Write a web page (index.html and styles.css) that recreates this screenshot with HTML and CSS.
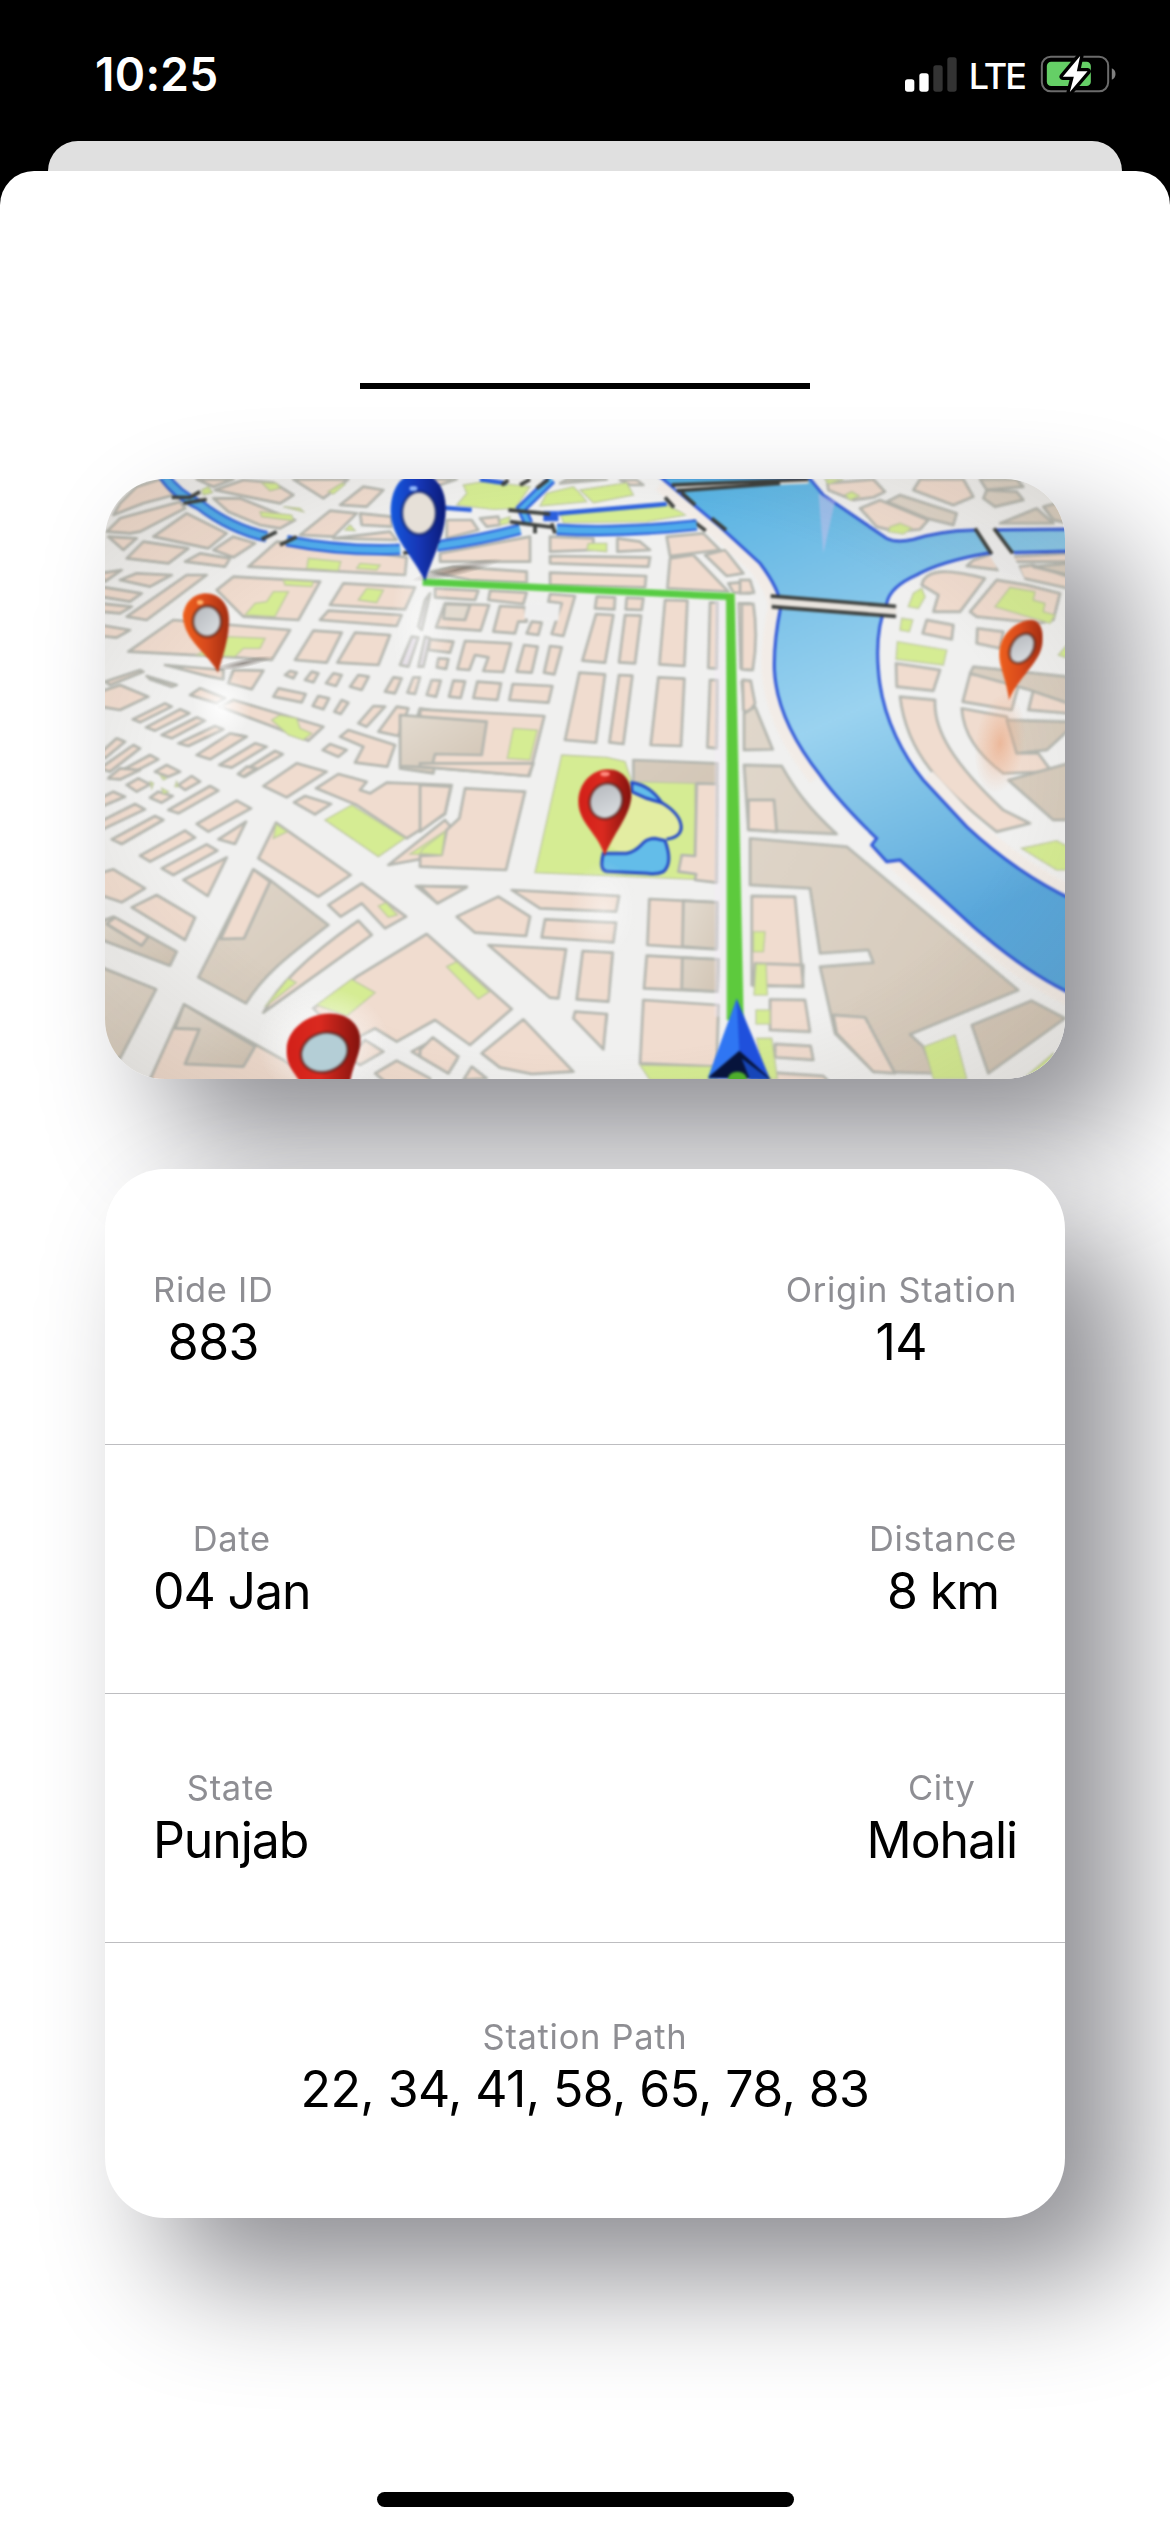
FILE: index.html
```html
<!DOCTYPE html>
<html lang="en">
<head>
<meta charset="utf-8">
<title>Ride details</title>
<link rel="stylesheet" href="styles.css">
</head>
<body>
<header class="status">
  <span class="time">10:25</span>
  <div class="indicators">
    <svg class="signal" viewBox="80 80 156 105">
      <rect x="80" y="147" width="28" height="37" rx="8" fill="#fff"/>
      <rect x="123" y="129" width="28" height="55" rx="8" fill="#fff"/>
      <rect x="165" y="105" width="28" height="79" rx="8" fill="#333"/>
      <rect x="207" y="81" width="28" height="103" rx="8" fill="#333"/>
    </svg>
    <span class="network">LTE</span>
    <svg class="battery" viewBox="478 72 230 120">
      <rect x="483" y="80" width="199" height="104" rx="27" fill="none" stroke="#6b6b6b" stroke-width="6"/>
      <rect x="498" y="95" width="132" height="73" rx="13" fill="#65cf66"/>
      <path d="M693 115Q704 120 704 132T693 149Z" fill="#808080"/>
      <path class="bolt" d="M598 78L546 140H579L567 186L620 124H588Z"/>
    </svg>
  </div>
</header>
<div class="back-sheet"></div>
<main class="sheet">
  <div class="rule"></div>
  <svg class="map" viewBox="15 27 2880 1800">
    <defs>
      <linearGradient id="water" x1="0" y1="0" x2="0.35" y2="1">
        <stop offset="0" stop-color="#51b0e2"/><stop offset=".3" stop-color="#7cc2e8"/>
        <stop offset=".55" stop-color="#9bd3f0"/><stop offset=".75" stop-color="#7cc0e6"/><stop offset="1" stop-color="#59a7db"/>
      </linearGradient>
      <linearGradient id="tan" x1="0" y1="0" x2="1" y2="1"><stop offset="0" stop-color="#e4dcd1"/><stop offset="1" stop-color="#d2c5b5"/></linearGradient>
      <linearGradient id="orange"><stop offset="0" stop-color="#ee601c"/><stop offset=".5" stop-color="#d84a1c"/><stop offset="1" stop-color="#a32e12"/></linearGradient>
      <linearGradient id="red"><stop offset="0" stop-color="#d22019"/><stop offset=".45" stop-color="#db2a20"/><stop offset="1" stop-color="#82130e"/></linearGradient>
      <linearGradient id="blue"><stop offset="0" stop-color="#1458dc"/><stop offset=".5" stop-color="#1738b8"/><stop offset="1" stop-color="#0b1b78"/></linearGradient>
      <linearGradient id="glass" x1="0" y1="0" x2="1" y2="1"><stop offset="0" stop-color="#b3b6bb"/><stop offset="1" stop-color="#dfe3e6"/></linearGradient>
      <radialGradient id="glow"><stop offset="0" stop-color="#fff" stop-opacity=".9"/><stop offset="1" stop-color="#fff" stop-opacity="0"/></radialGradient>
      <radialGradient id="ember"><stop offset="0" stop-color="#e8a078" stop-opacity=".6"/><stop offset="1" stop-color="#eeb08b" stop-opacity="0"/></radialGradient>
      <radialGradient id="shade"><stop offset="0" stop-color="#50463e" stop-opacity=".55"/><stop offset="1" stop-color="#50463e" stop-opacity="0"/></radialGradient>
      <radialGradient id="edge" cx=".5" cy=".5" r=".72"><stop offset=".62" stop-color="#54442f" stop-opacity="0"/><stop offset="1" stop-color="#54442f" stop-opacity=".14"/></radialGradient>
    </defs>
    <rect x="0" y="0" width="2910" height="1850" fill="#f0f0ef"/>
    <g class="soft">
      <!-- north-west blocks -->
      <g>
        <path class="b" d="M60 100L110 50 180 28 222 75 130 100 40 135ZM20 185L60 145 240 95 255 115 120 185 90 190ZM160 200L260 130 380 190 325 235ZM25 200L110 205 70 240ZM80 265L130 215 265 235 205 280ZM255 275L300 250 390 265 375 290ZM340 240L400 200 465 220 400 262ZM340 85L420 85 520 125 585 150 540 175 480 165 385 125ZM345 60L430 30 520 38 580 75 540 100 440 80ZM290 28L400 28 340 50ZM580 28H745L670 85ZM720 105L790 50 850 60 800 110ZM600 195L690 122 770 130 700 200ZM780 130L875 140V170L785 165ZM445 290L530 215 700 232 920 262 915 315ZM700 205L870 185 890 210Z"/>
        <path class="b" d="M0 310L65 300 15 335ZM60 330L110 310 215 315 150 350ZM0 350L125 370 90 395 0 380ZM0 400L95 410 60 430 0 425ZM80 440L260 315H320L140 450ZM0 465L90 480 50 503 0 498ZM350 360L400 320 660 335 595 450 430 440ZM690 405L730 340 945 352 915 418ZM660 450L685 422 905 435 890 468ZM85 545L220 450 570 480 515 570 370 560ZM585 570L640 482 725 488 680 578ZM712 578L765 488 870 495 835 585ZM195 585L370 600V628L330 620ZM385 640L400 600 490 602 455 658Z"/>
        <path class="b" d="M555 615L570 603 590 608 580 625ZM615 630L635 605 655 610 640 637ZM678 640L700 610 725 615 708 648ZM750 650L775 615 806 620 785 660ZM855 665L880 622 905 625 885 670ZM922 668L940 622H960L945 672ZM520 680L535 655 617 672 605 697ZM638 708L655 678 687 685 670 718ZM703 725L725 690 745 698 722 732ZM270 675L300 655 375 685 350 700ZM360 710L400 690 670 770 625 812 520 770ZM140 618L230 645 215 650 150 628ZM15 635L120 600 130 605 30 645ZM0 665L60 645 145 680 60 720 0 710Z"/>
        <path class="b" d="M98 748L195 700 215 710 120 757ZM138 772L240 718 268 730 165 782ZM185 795L290 742 315 752 215 805ZM235 820L345 768 370 778 265 828ZM290 855L390 790 440 800 330 868ZM358 885L465 820 500 830 395 893ZM415 912L525 843 548 853 435 920ZM0 850L50 805 75 815 15 865ZM0 895L100 825 120 835 30 905ZM30 920L150 855 175 868 60 928ZM165 905L200 885 240 905 205 920ZM775 760L820 708 855 710 800 770ZM835 785L890 710 925 715 895 798ZM720 800L745 780 885 825 862 890 765 878 790 830ZM668 840L690 822 740 840 715 860Z"/>
        <path class="t" d="M900 895L960 715 1160 750 1145 860 1010 855 1000 910Z"/>
        <path class="b v" d="M955 470L975 390 990 370 965 480ZM900 585L935 500 955 502 925 590ZM955 590L975 500 990 505 970 590Z"/>
        <path class="g" d="M435 435L465 400 500 395 520 365H565L525 440ZM550 330L640 335 635 350 555 345ZM775 390L800 355 850 360 830 398ZM290 555L380 500 495 505 480 535H430L405 560ZM515 750L540 735 590 745 600 775 635 790 610 810 565 795ZM620 295L625 265 722 275 715 302ZM770 295L780 280 840 285 830 300ZM480 125L575 135 580 152 485 140ZM485 38L530 40 540 55 510 62ZM305 60L325 50 337 68 310 75ZM685 65L725 40 735 43 700 72ZM550 110L600 115 610 125ZM735 180L750 165 765 182Z"/>
      </g>
      <!-- north blocks -->
      <g transform="translate(960 0)">
        <path class="b" d="M0 70L60 45 110 28H0ZM80 150L155 150 175 180 80 205ZM180 145L235 140 240 165 200 170ZM60 250L330 200V275L60 275ZM30 305L100 290 320 305V338L150 330ZM390 200L520 205V240L390 245ZM390 258L690 262 685 290 390 280ZM390 308L678 318 675 352 390 345ZM592 205L660 215 690 240 592 245ZM740 200L850 190 900 240 750 258ZM750 265L820 255 925 365 742 355ZM855 255L915 240 970 310 920 318ZM925 340L990 335V370L940 368ZM45 355L175 362 165 390 45 382ZM210 362L320 368 310 402 205 390ZM390 372L465 378 430 498 395 492 425 400 385 395ZM600 30L650 30 670 45 630 45ZM420 40L560 28H440Z"/>
        <path class="b" d="M75 400L207 405 182 482 48 472ZM240 408L315 412 320 455 295 455 285 490 220 485ZM335 455L365 458 355 495 320 490ZM530 380L585 382 583 418 525 415ZM620 383L670 385 665 420 617 418ZM528 432L580 435 555 578 487 572ZM615 435L663 437 645 580 597 577ZM735 390L802 392 793 588 718 583ZM870 398H892L890 596 865 594ZM955 400H990L988 600 962 595ZM30 508L100 515 90 548 25 540ZM55 565L85 567 78 597 50 592ZM135 513L273 520 250 606 190 603 205 562 165 555 148 600 112 597ZM312 525L353 530 335 608 290 605ZM390 528L425 532 403 613 372 608ZM478 608L555 613 528 818 435 810ZM597 615L637 617 610 822 568 817ZM715 622L793 626 783 828 692 825ZM870 630H892L890 835 862 832ZM35 630L62 632 48 680 20 675ZM100 632L135 634 122 684 87 680ZM172 635L243 640 232 690 160 684ZM278 642L397 648 385 698 268 690ZM965 635H990V740L975 735Z"/>
        <path class="b" d="M0 718L373 738 328 918 0 890Z"/><path class="t" d="M-60 735L200 755 185 855 45 852 35 893-60 888Z"/>
        <path class="g" d="M280 775L352 780 330 870 262 865ZM505 220H560V245L500 240ZM130 45L190 35 330 50 285 115 220 118 110 105 140 70ZM380 70L460 50 480 70 500 95 360 108ZM480 60L620 38 640 75 520 98ZM420 130L740 105 800 135 680 155 430 158ZM240 150L270 140 265 160 240 165Z"/>
        <path class="t" d="M75 402L150 405 135 450 70 446ZM640 870L892 880 890 1040 640 1010Z"/>
        <path class="g" d="M425 855L560 862 615 875 635 935 825 940 827 1228 345 1208Z"/>
        <path class="b" d="M830 940L892 942 890 1238 825 1230 828 1212 775 1205 785 1155 825 1158Z"/>
        <path class="road" d="M318 395L420 402 415 452 312 445Z"/>
      </g>
      <!-- south-west blocks -->
      <g transform="translate(0 900)">
        <path class="b" d="M490 48L590-20 680 5 560 82ZM648 55L715 12 800 35 780 60 810 70 860 38 1055 45 1035 132 920 205 770 105ZM582 97L615 78 693 102 645 133ZM25 25L60-5 120 0 60 28ZM80 45L115 25 150 43 110 65ZM235 45L275 18 300 35 255 60ZM150 83L175 65 218 78 185 98ZM415 12L440-10 470-5 430 20ZM205 120L330 48 355 62 235 130ZM0 85L40 65 75 80 0 112ZM0 155L105 102 135 118 0 182ZM35 208L165 138 190 150 65 222ZM290 162L410 92 453 115 325 185ZM355 208L438 155 405 222ZM120 257L255 182 285 203 150 275ZM185 295L320 223 352 242 220 315ZM250 330L380 262 323 378ZM0 310L40 298 135 355 65 397 0 375ZM95 412L170 375 285 443 255 510Z"/>
        <path class="t" d="M0 455L40 440 230 545 210 587 0 508Z"/><path class="b" d="M20 462L45 442 145 500 125 527Z"/>
        <path class="t" d="M0 590L168 658 60 865 0 850ZM460 298L510 330 685 465C590 540 500 600 438 700L295 622Z"/>
        <path class="b" d="M460 298L510 335 432 505 362 507ZM528 158L752 315 655 380 475 265ZM685 405L785 340 918 440 855 475 785 400 722 440ZM775 452L815 495 490 728C530 650 620 560 775 452Z"/>
        <path class="b" d="M770 620L980 492 1235 717 1110 825 1005 750 890 815 825 775 740 820 640 715ZM145 940L252 703 550 870 650 940ZM745 865L795 810 850 845 780 885ZM935 845L990 815 1070 870 1045 910ZM825 910L890 872 990 925V940H860ZM865 285L1035 150 1060 180 1030 255ZM948 348L1100 350 1012 400Z"/>
        <path class="t" d="M252 703L465 830 430 890 255 882 298 778 225 775Z"/>
        <path class="g" d="M675 150L755 105 915 205 835 260ZM528 162L562 185 520 205ZM835 408L858 398 892 435 865 442ZM650 705L755 628 825 668 740 738ZM565 625L588 638 495 710ZM930 252L1040 180 1025 255ZM150 35L160 40 155 55ZM180 15L200 25 190 30ZM230 35L235 50 225 50ZM185 55L205 65 190 72Z"/>
      </g>
      <!-- south blocks -->
      <g transform="translate(960 900)">
        <path class="b" d="M0-10L325 18 340-20H0ZM0 45L92 50 75 130 0 185ZM135 55L315 65 258 300 0 290 0 258 65 255 80 180 118 145ZM0 348L140 352 52 400ZM235 380L330 440 318 498 165 488 110 440ZM275 360L597 378 588 425 360 415ZM375 448L588 458 580 517 365 502ZM205 525L438 538 415 685 390 683ZM488 543L578 548 565 695 470 688ZM465 725L560 732 550 838 460 745ZM310 748L460 905 335 912 240 893 185 850ZM0 840L38 802 115 860 85 910 0 860ZM130 930L155 890 200 925ZM688 387L892 397 890 538 682 525ZM680 557L895 568 892 665 672 655ZM670 690L895 705 890 890 660 880Z"/>
        <path class="t" d="M790 392L892 397 890 537 787 530ZM787 563L895 568 892 665 785 658Z"/>
        <path class="g" d="M80 590L110 575 208 665 175 687ZM660 885L890 890V930H690ZM10 235L75 185 65 255 0 250Z"/>
      </g>
      <!-- east bank -->
      <g transform="translate(1920 0)">
        <path class="b" d="M0 330L30 330 42 368 0 370ZM5 402L40 402C50 470 50 530 38 600L5 598ZM8 630L32 632 45 700 25 730 10 720ZM262 40L400 28 435 65 400 82 340 90 265 60ZM360 115L420 90 565 150 540 178 470 185 410 170ZM540 28H670L700 80 640 105 520 60ZM700 270L760 250 775 300 680 288ZM550 330C570 300 620 295 735 325L660 425 580 425 595 375 545 345ZM690 425L770 330 860 345 960 370 940 450 900 460 710 440ZM835 290L880 285 985 320V355L850 325ZM820 260L985 250V275H820ZM560 450L640 465 635 508 548 490ZM712 475L790 485 780 535 710 520ZM468 580L600 600 580 662 470 650ZM480 680L585 690C580 780 640 880 790 1020L870 1060 770 1085C600 950 500 850 480 680ZM690 612L840 630 815 720 668 695ZM880 660L985 690V730L865 720ZM665 715L800 740 830 850 895 850 935 905 790 910C710 850 670 790 665 715Z"/>
        <path class="t" d="M12 730L45 710 98 838 12 840ZM12 885L125 888C160 950 200 1010 290 1092L25 1080ZM30 1105L320 1130 835 1560 510 1693 550 1730 580 1810 400 1805 285 1690 240 1490 400 1478 385 1440 240 1450 210 1255 30 1245ZM695 1665L875 1592 975 1645 745 1810ZM700 590L985 620V700L870 660 690 610ZM800 750L985 755V780L920 840 830 850ZM805 930L985 880V1050L940 1050ZM740 60L830 65 850 90 765 110 730 85ZM440 95L480 75 650 130 640 165 560 145ZM780 160L890 115 940 160ZM910 110L985 90V160L940 150ZM720 28L830 28 850 50 740 60ZM880 290L985 280V315Z"/>
        <path class="b" d="M25 990L102 990 110 1085 25 1078ZM35 1278L165 1280 190 1550 35 1545ZM45 1480L190 1485 188 1548H40ZM90 1588L195 1590 210 1685 90 1680ZM105 1722L212 1728 220 1770 105 1762ZM60 1805L250 1818 370 1940H60ZM280 1635L375 1642 465 1810 400 1805 290 1690Z"/>
        <path class="g" d="M545 355L555 380 535 415 505 410 520 370ZM485 445L518 450 508 485 480 480ZM472 515L620 540 610 585 468 568ZM765 410L810 352 885 365 880 390 915 400 910 425 945 435 930 460ZM450 170L480 160 515 175 490 192 445 185ZM845 1135L950 1112 985 1130V1200L950 1200ZM552 1730L645 1695 680 1827H580ZM40 1385H75L70 1445H40ZM48 1482H78L82 1575H42ZM48 1620H90V1662H48ZM50 1705H95L112 1827H70ZM315 75L335 65 358 78 330 90ZM255 28H310L265 42ZM850 1827L940 1750 930 1827ZM985 520L955 555 985 565Z"/>
        <path class="road" d="M695 170L775 160 855 330 785 315Z"/>
      </g>
      <!-- river and canals -->
      <g transform="translate(1920 0)">
        <path class="bank" d="M240 915Q110 750 103 600 100 520 122 410 120 360 60 280L-60 170-230 30M550 930L680 1070Q830 1210 990 1285M410 1105L480 1170 700 1370Q850 1500 1000 1575"/>
        <path class="river" d="M205 20L250 75 440 205Q470 220 520 208 600 182 700 180L1000 177V243L740 250Q600 275 530 315 450 350 440 400 405 480 415 600C425 750 500 870 550 930L680 1070Q830 1210 1000 1290V1575L975 1562Q850 1500 700 1370L480 1170 440 1175 395 1125 410 1105C300 1000 250 930 240 915Q110 750 103 600 100 520 122 410 120 360 60 280L-60 170-240 20Z"/>
        <path d="M235 70L250 250 285 95Z" fill="#d9c4ef" opacity=".45"/>
        <path class="road" d="M700 160L755 165 825 255 760 260Z"/>
        <path class="rail" d="M705 175L755 252M762 175L818 250"/>
        <path class="bridge" d="M92 395L468 424"/><path class="rail" d="M92 378L468 409M95 410L468 439"/>
        <path class="bridge slim" d="M-195 50L205 34"/>
        <path class="rail" d="M-205 45L205 28M-190 62L120 40M-225 82L-198 112M-175 68L-135 105M-142 152L-103 182M-85 145L-42 180"/>
      </g>
      <path class="canal-edge" d="M190 15Q230 75 300 105 390 175 500 200M560 212Q730 245 900 238M1010 228Q1140 210 1260 178M1370 178Q1550 190 1790 165"/>
      <path class="canal" d="M190 15Q230 75 300 105 390 175 500 200M560 212Q730 245 900 238M1010 228Q1140 210 1260 178M1370 178Q1550 190 1790 165"/>
      <path class="canal-edge slim" d="M1375 130L1700 102M1030 113L1115 120M1140 28L1220 40"/>
      <path class="canal-edge thin" d="M1355 28L1265 115 1285 160M1330 138H1375"/>
      <path class="canal thin" d="M1355 28L1265 115 1285 160"/>
      <path class="rail" d="M215 82H270L300 65M250 100L320 88M485 208L530 185M540 225L590 200M910 250L945 240M1225 120L1350 132M1230 155L1360 172M1305 170V190M1355 160L1365 190M1205 45L1225 30M1260 45L1290 28M1310 55L1345 28"/>
      <!-- pond -->
      <path d="M1590 940C1620 960 1650 960 1690 1000 1740 1030 1755 1080 1720 1105L1640 1110 1570 1150 1530 1130 1560 1000Z" fill="#e3eda2"/>
      <path class="pond" d="M1595 938Q1650 945 1685 998L1640 985 1595 965ZM1510 1150H1580C1630 1140 1620 1105 1665 1105L1695 1112Q1720 1180 1690 1205 1670 1215 1640 1210L1525 1205Q1495 1205 1510 1150Z"/>
      <path d="M1685 998C1755 1040 1765 1100 1700 1107" fill="none" stroke="#2449c8" stroke-width="9"/>
    </g>
    <rect x="0" y="0" width="2910" height="1850" fill="url(#edge)"/>
    <ellipse cx="365" cy="710" rx="90" ry="110" fill="url(#glow)"/>
    <ellipse cx="960" cy="470" rx="90" ry="260" fill="url(#glow)" opacity=".5"/>
    <ellipse cx="1510" cy="1320" rx="100" ry="150" fill="url(#glow)" opacity=".5"/>
    <ellipse cx="670" cy="1720" rx="200" ry="170" fill="url(#glow)"/>
    <ellipse cx="430" cy="580" rx="95" ry="14" fill="url(#shade)" transform="rotate(-12 430 580)"/>
    <ellipse cx="1070" cy="300" rx="140" ry="18" fill="url(#shade)" transform="rotate(-13 1070 300)"/>
    <ellipse cx="2700" cy="820" rx="75" ry="150" fill="url(#ember)" transform="rotate(8 2700 820)"/>
    <g class="soft">
      <path d="M1878 1640V380" stroke="#f3ebf8" stroke-width="70" opacity=".4"/>
      <path d="M968 336L1893 380" stroke="#57cc43" stroke-width="21"/>
      <path d="M1878 370H1904L1931 1650H1880V900Z" fill="#5dca3d"/>
      <!-- pins -->
      <path d="M318 370C360 370 388 405 387 450 386 510 370 550 354 608 325 550 250 510 250 440 250 400 280 370 318 370Z" fill="url(#orange)"/>
      <ellipse class="lens" cx="321" cy="454" rx="42" ry="46"/>
      <path d="M955 10C1010 10 1040 60 1037 125 1034 200 1000 255 975 333 940 260 872 200 872 125 872 60 900 10 955 10Z" fill="url(#blue)"/>
      <ellipse class="lens cream" cx="957" cy="129" rx="51" ry="64"/>
      <path d="M2790 450C2820 448 2832 480 2827 520 2820 580 2755 620 2727 690 2718 620 2695 590 2698 545 2702 490 2750 452 2790 450Z" fill="url(#orange)"/>
      <ellipse class="lens" cx="2766" cy="535" rx="33" ry="48" transform="rotate(32 2766 535)"/>
      <path d="M1520 898C1570 895 1597 935 1594 980 1590 1040 1540 1090 1514 1158 1495 1090 1435 1060 1435 995 1435 940 1475 900 1520 898Z" fill="url(#red)"/>
      <ellipse class="lens" cx="1518" cy="993" rx="48" ry="54" transform="rotate(25 1518 993)"/>
      <path d="M690 1630C745 1630 785 1665 781 1720 778 1760 755 1790 748 1850H610C580 1800 558 1790 560 1735 562 1680 620 1630 690 1630Z" fill="url(#red)"/>
      <ellipse class="lens sky" cx="673" cy="1747" rx="71" ry="58" transform="rotate(-18 673 1747)"/>
      <ellipse cx="940" cy="55" rx="12" ry="8" fill="#91b7fa"/><ellipse cx="300" cy="397" rx="10" ry="7" fill="#ffb36c"/>
      <ellipse cx="1515" cy="912" rx="14" ry="7" fill="#ff8b7f"/>
      <!-- heading arrow -->
      <path d="M1910 1586L2010 1827H1824Z" fill="#1f50dc"/>
      <path d="M1910 1586L1918 1745 1824 1822Z" fill="#2f76f3"/>
      <path d="M1824 1822L1918 1742 2012 1827Z" fill="#07143c"/>
      <path d="M1925 1765L2012 1830H1950Z" fill="#1746b8"/>
      <ellipse cx="1912" cy="1825" rx="28" ry="20" fill="#4eae2c"/>
    </g>
  </svg>
  <section class="card">
    <div class="row">
      <div class="item"><span class="label">Ride ID</span><span class="value number">883</span></div>
      <div class="item"><span class="label">Origin Station</span><span class="value number">14</span></div>
    </div>
    <div class="row">
      <div class="item"><span class="label">Date</span><span class="value">04 Jan</span></div>
      <div class="item"><span class="label">Distance</span><span class="value">8 km</span></div>
    </div>
    <div class="row">
      <div class="item"><span class="label">State</span><span class="value">Punjab</span></div>
      <div class="item"><span class="label">City</span><span class="value">Mohali</span></div>
    </div>
    <div class="row single">
      <div class="item"><span class="label">Station Path</span><span class="value number">22, 34, 41, 58, 65, 78, 83</span></div>
    </div>
  </section>
  <div class="home"></div>
</main>
</body>
</html>
```
FILE: styles.css
```css
* { box-sizing: border-box; }
body {
  margin: 0;
  height: 2532px;
  display: flex;
  flex-direction: column;
  overflow: hidden;
  background: #000;
  font-family: Inter, "Liberation Sans", sans-serif;
}
.status {
  height: 141px;
  padding: 7px 53px 0 95px;
  display: flex;
  align-items: center;
  justify-content: space-between;
  color: #fff;
}
.time { font-size: 46px; font-weight: 600; letter-spacing: 0.3px; }
.indicators { display: flex; align-items: center; }
.signal { width: 52px; height: 35px; }
.network { margin: 3px 15px 0 12px; font-size: 36px; font-weight: 450; line-height: 40px; letter-spacing: -2px; }
.battery { width: 77px; height: 40px; }
.bolt { fill: #fff; stroke: #000; stroke-width: 20; stroke-linejoin: round; paint-order: stroke; }
.back-sheet {
  height: 30px;
  flex: none;
  margin: 0 48px;
  border-radius: 30px 30px 0 0;
  background: #e0e0e0;
}
.sheet {
  flex: 1;
  display: flex;
  flex-direction: column;
  align-items: center;
  padding-top: 212px;
  border-radius: 34px 34px 0 0;
  background: #fff;
  overflow: hidden;
}
.rule { width: 450px; height: 6px; flex: none; background: #000; position: relative; z-index: 1; }
.map, .card {
  width: 960px;
  flex: none;
  border-radius: 60px;
  box-shadow: 60px 60px 120px #8e8e93;
}
.map { height: 600px; margin-top: 90px; }
.card { height: 1049px; margin-top: 90px; padding-top: 27px; background: #fff; }
.row {
  height: 249px;
  padding: 72px 48px 0;
  display: flex;
  justify-content: space-between;
  border-bottom: 1px solid #bdbdc0;
}
.row.single { justify-content: center; border-bottom: 0; }
.item { display: flex; flex-direction: column; align-items: center; white-space: nowrap; }
.label { font-size: 34.5px; line-height: 43px; color: #8e8e93; letter-spacing: 0.7px; }
.value { font-size: 50px; line-height: 62px; color: #000; letter-spacing: -1.1px; }
.value.number { letter-spacing: -0.6px; }
.home { width: 417px; height: 15px; flex: none; margin-top: 274px; border-radius: 8px; background: #000; }

/* map artwork */
.soft { filter: blur(3px); }
.b { fill: #f0dccf; stroke: #b4b6af; stroke-width: 8; stroke-linejoin: round; }
.b.v { fill: #e3dce5; }
.t { fill: url(#tan); stroke: #b4b6af; stroke-width: 8; stroke-linejoin: round; }
.g { fill: #d5ec93; stroke: #bfc8a4; stroke-width: 4; }
.road { fill: #efefef; }
.bank { fill: none; stroke: #f2ece7; stroke-width: 76; }
.river { fill: url(#water); stroke: #3158d8; stroke-width: 9; }
.rail { fill: none; stroke: #3c3f3c; stroke-width: 11; }
.bridge { fill: none; stroke: #e9e4de; stroke-width: 28; }
.bridge.slim { stroke-width: 14; }
.canal-edge { fill: none; stroke: #2b5fdd; stroke-width: 34; }
.canal { fill: none; stroke: #50aceb; stroke-width: 21; }
.canal-edge.slim { stroke-width: 13; }
.canal-edge.thin { stroke-width: 30; }
.canal.thin { stroke-width: 15; }
.pond { fill: #63bde9; stroke: #2449c8; stroke-width: 9; }
.lens { fill: url(#glass); stroke: #3b1b1880; stroke-width: 9; }
.lens.cream { fill: #e6e0d8; stroke: #0b1b5c90; }
.lens.sky { fill: #b4ced6; }
```
